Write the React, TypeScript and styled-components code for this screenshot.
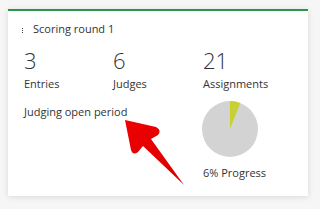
import React from "react";
import styled, { createGlobalStyle } from "styled-components";

const Global = createGlobalStyle`
  html, body { margin: 0; padding: 0; background: #f6f6f6; }
  body { font-family: "Open Sans", "Liberation Sans", sans-serif; color: #333; }
`;

const Page = styled.div`
  position: relative;
  width: 320px;
  height: 209px;
  padding: 9px 12px 0 8px;
  box-sizing: border-box;
`;

const Card = styled.div`
  width: 300px;
  height: 187px;
  background: #fff;
  border-top: 2px solid #2b9548;
  box-shadow: 0 1px 6px rgba(0, 0, 0, 0.12);
  box-sizing: border-box;
  padding: 8px 16px 0 14px;
`;

const Header = styled.div`
  display: flex;
  align-items: center;
  gap: 10px;
  height: 18px;
  font-size: 11px;
`;

const Dots = styled.span`
  display: flex;
  flex-direction: column;
  gap: 1px;
  margin-top: 4px;
  & > i {
    display: block;
    width: 1px;
    height: 1px;
    background: #444;
  }
`;

const Stats = styled.div`
  display: grid;
  grid-template-columns: 89px 90px 1fr;
  padding-left: 2px;
  margin-top: 9px;
`;

const Stat = styled.div`
  display: flex;
  flex-direction: column;
`;

const Value = styled.div`
  font-size: 22px;
  font-weight: 300;
  line-height: 28px;
`;

const Label = styled.div`
  font-size: 11px;
  line-height: 16px;
  margin-top: 2px;
`;

const Lower = styled.div`
  display: grid;
  grid-template-columns: 179px 1fr;
  padding-left: 2px;
  margin-top: 12px;
`;

const Status = styled.div`
  font-size: 11px;
  line-height: 16px;
`;

const ProgressCol = styled.div`
  display: flex;
  flex-direction: column;
  align-items: flex-start;
`;

const Pie = styled.svg`
  display: block;
  margin-left: -1px;
  margin-top: -3px;
`;

const ProgressLabel = styled.div`
  font-size: 11px;
  line-height: 16px;
  margin-top: 8px;
`;

const Arrow = styled.svg`
  position: absolute;
  left: 0;
  top: 0;
  pointer-events: none;
`;

function PieChart({ pct }: { pct: number }) {
  const r = 28;
  const c = 28;
  const a = (pct / 100) * Math.PI * 2;
  const x = c + r * Math.sin(a);
  const y = c - r * Math.cos(a);
  return (
    <Pie width={56} height={56} viewBox="0 0 56 56">
      <circle cx={c} cy={c} r={r} fill="#d3d3d3" />
      <path d={`M${c},${c} L${c},${c - r} A${r},${r} 0 0 1 ${x},${y} Z`} fill="#c7d134" />
    </Pie>
  );
}

export default function App() {
  return (
    <>
      <Global />
      <Page>
        <Card>
          <Header>
            <Dots>
              <i />
              <i />
              <i />
            </Dots>
            <span>Scoring round 1</span>
          </Header>
          <Stats>
            <Stat>
              <Value>3</Value>
              <Label>Entries</Label>
            </Stat>
            <Stat>
              <Value>6</Value>
              <Label>Judges</Label>
            </Stat>
            <Stat>
              <Value>21</Value>
              <Label>Assignments</Label>
            </Stat>
          </Stats>
          <Lower>
            <Status>Judging open period</Status>
            <ProgressCol>
              <PieChart pct={6} />
              <ProgressLabel>6% Progress</ProgressLabel>
            </ProgressCol>
          </Lower>
        </Card>
        <Arrow width={320} height={209} viewBox="0 0 320 209">
          <defs>
            <linearGradient id="ag" x1="0" y1="0" x2="1" y2="1">
              <stop offset="0" stopColor="#f00000" />
              <stop offset="1" stopColor="#d80000" />
            </linearGradient>
          </defs>
          <path
            d="M125,120 L156,127 Q162,130 158,135 L151,139 L184,185 L143,146 L138,152 Q133,156 131,150 Z"
            fill="url(#ag)"
          />
        </Arrow>
      </Page>
    </>
  );
}
